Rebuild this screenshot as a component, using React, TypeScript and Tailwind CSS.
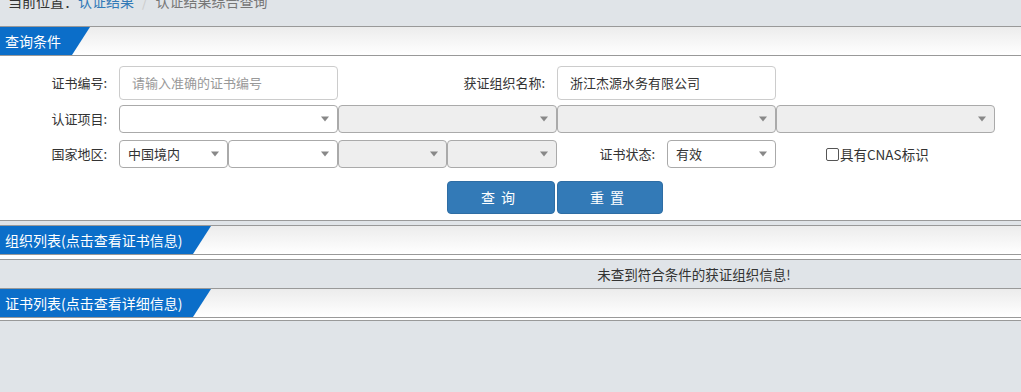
import React from 'react';

const Arrow = () => (
  <span className="absolute right-[8px] top-1/2 -translate-y-1/2 h-0 w-0 border-x-[4px] border-t-[5px] border-x-transparent border-t-[#888]" />
);

const Select = ({ w, text, disabled }: { w: string; text?: string; disabled?: boolean }) => (
  <div
    className={`relative h-[28px] ${w} rounded-[4px] border border-[#aaa] ${
      disabled ? 'bg-[#eeeeee]' : 'bg-white'
    } pl-[8px] text-[13px] leading-[26px] text-[#333]`}
  >
    {text}
    <Arrow />
  </div>
);

const SectionHeader = ({ title, tab }: { title: string; tab: string }) => (
  <div className="flex h-[30px] border-y border-[#999] bg-linear-to-b from-[#ececec] to-white">
    <div
      className={`h-full ${tab} bg-[#0b6ec9] pl-[5px] text-[14px] leading-[28px] text-white [clip-path:polygon(0_0,100%_0,calc(100%-18px)_100%,0_100%)]`}
    >
      {title}
    </div>
  </div>
);

const Label = ({ children, w }: { children: React.ReactNode; w: string }) => (
  <div className={`${w} shrink-0 pr-[12px] text-right text-[13px] text-[#333]`}>{children}</div>
);

export default function App() {
  return (
    <div className="min-h-[392px] w-[1021px] bg-[#e0e4e8] font-['Microsoft_YaHei','Noto_Sans_CJK_SC',sans-serif]">
      <div className="h-[26px] overflow-hidden">
        <div className="-mt-[9px] pl-[8px] text-[14px] leading-[20px] text-[#333]">
          当前位置：<span className="text-[#337ab7]">认证结果</span>
          <span className="px-[8px] text-[#ccc]">/</span>
          <span className="text-[#777]">认证结果综合查询</span>
        </div>
      </div>

      <SectionHeader title="查询条件" tab="w-[90px]" />

      <div className="flex flex-col border-b border-[#999] bg-white pt-[10px]">
        <div className="flex items-center">
          <Label w="w-[119px]">证书编号:</Label>
          <div className="h-[34px] w-[219px] rounded-[4px] border border-[#ccc] pl-[12px] text-[13px] leading-[32px] text-[#999]">
            请输入准确的证书编号
          </div>
          <Label w="w-[219px]">获证组织名称:</Label>
          <div className="h-[34px] w-[219px] rounded-[4px] border border-[#ccc] pl-[12px] text-[13px] leading-[32px] text-[#333]">
            浙江杰源水务有限公司
          </div>
        </div>

        <div className="mt-[5px] flex items-center">
          <Label w="w-[119px]">认证项目:</Label>
          <Select w="w-[219px]" />
          <Select w="w-[219px]" disabled />
          <Select w="w-[219px]" disabled />
          <Select w="w-[219px]" disabled />
        </div>

        <div className="mt-[7px] flex items-center">
          <Label w="w-[119px]">国家地区:</Label>
          <Select w="w-[109px]" text="中国境内" />
          <Select w="w-[110px]" />
          <Select w="w-[109px]" disabled />
          <Select w="w-[110px]" disabled />
          <Label w="w-[110px]">证书状态:</Label>
          <Select w="w-[109px]" text="有效" />
          <div className="flex w-[219px] items-center pl-[50px] text-[13.5px] text-[#333]">
            <span className="mr-[1px] inline-block h-[13px] w-[13px] rounded-[2px] border border-[#555] bg-white" />
            具有CNAS标识
          </div>
        </div>

        <div className="mt-[13px] mb-[6px] flex gap-[2px] pl-[447px]">
          <button className="h-[33px] w-[108px] rounded-[4px] border border-[#2e6da4] bg-[#337ab7] text-[14px] tracking-[6px] text-white">
            查询
          </button>
          <button className="h-[33px] w-[106px] rounded-[4px] border border-[#2e6da4] bg-[#337ab7] text-[14px] tracking-[6px] text-white">
            重置
          </button>
        </div>
      </div>

      <div className="h-[4px]" />
      <SectionHeader title="组织列表(点击查看证书信息)" tab="w-[211px]" />
      <div className="h-[4px] bg-white" />
      <div className="border-t border-[#999] pl-[367px] text-center text-[13.5px] leading-[28px] text-[#333]">
        未查到符合条件的获证组织信息!
      </div>
      <SectionHeader title="证书列表(点击查看详细信息)" tab="w-[211px]" />
      <div className="h-[3px] border-b border-[#999] bg-white" />
    </div>
  );
}
